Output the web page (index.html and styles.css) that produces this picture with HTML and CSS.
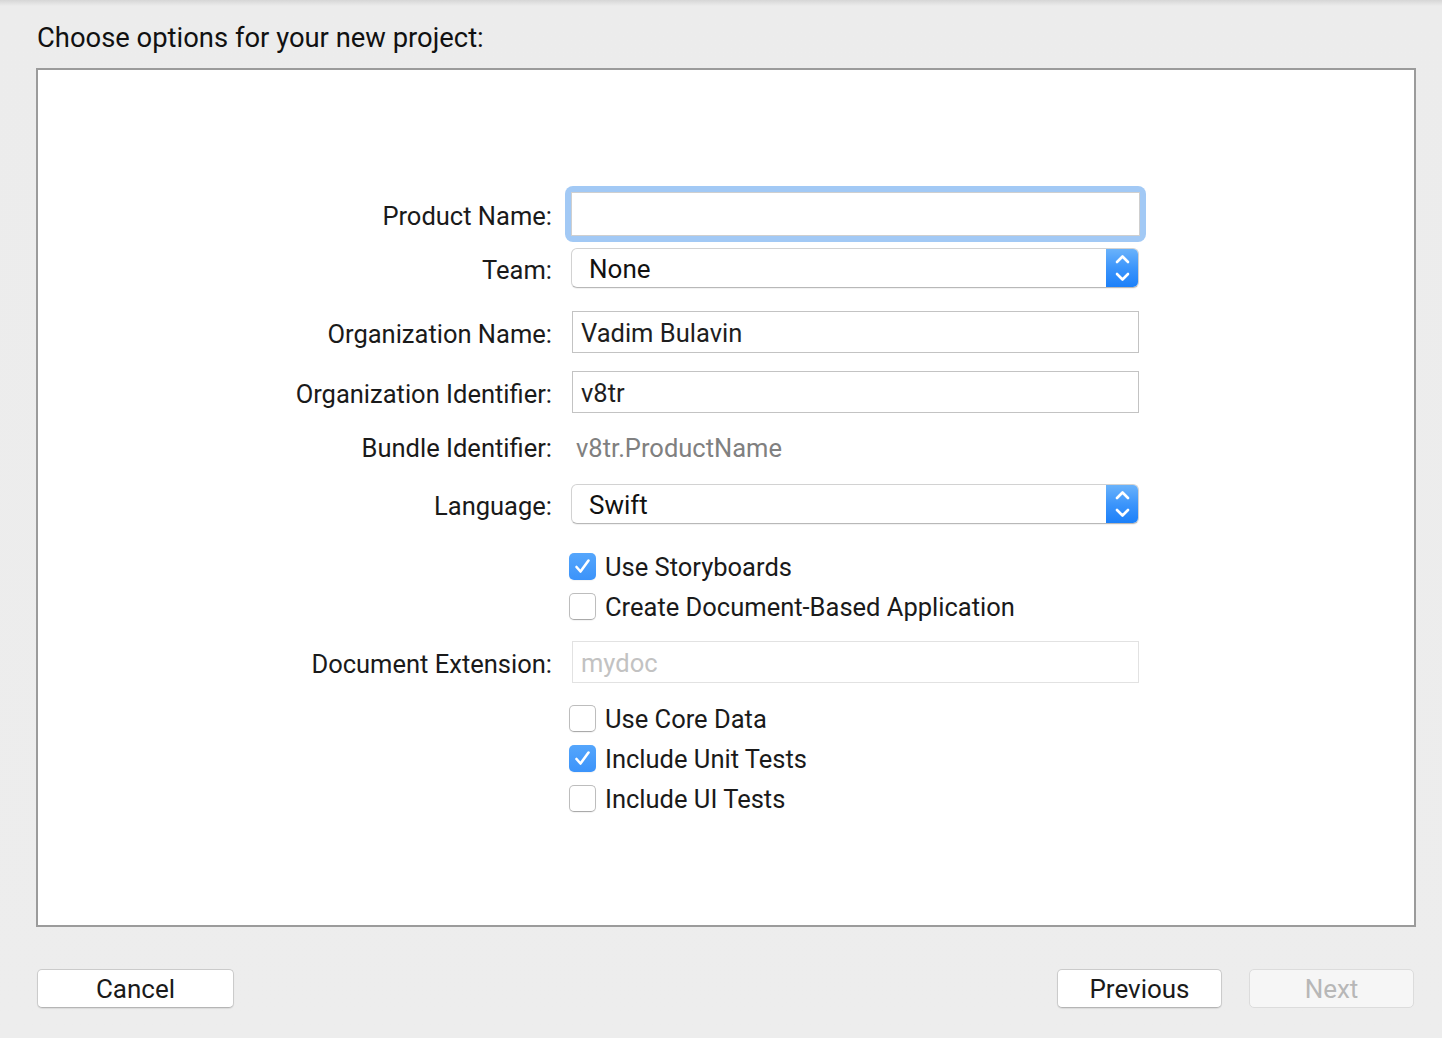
FILE: index.html
```html
<!DOCTYPE html>
<html>
<head>
<meta charset="utf-8">
<title>Choose options for your new project</title>
<link rel="stylesheet" href="styles.css">
</head>
<body>
<div class="window">
  <div class="title">Choose options for your new project:</div>
  <div class="panel">
    <div class="form">
      <div class="row row-product">
        <div class="label">Product Name:</div>
        <div class="control">
          <div class="focus-ring"><div class="field field-focused"></div></div>
        </div>
      </div>
      <div class="row row-team">
        <div class="label">Team:</div>
        <div class="control">
          <div class="popup">
            <span class="popup-text">None</span>
            <span class="popup-arrows">
              <svg width="33" height="40" viewBox="0 0 33 40"><path d="M11 14 L16.5 8.5 L22 14 M11 26 L16.5 31.5 L22 26" fill="none" stroke="#fff" stroke-width="2.6" stroke-linecap="round" stroke-linejoin="round"/></svg>
            </span>
          </div>
        </div>
      </div>
      <div class="row row-org">
        <div class="label">Organization Name:</div>
        <div class="control"><div class="field">Vadim Bulavin</div></div>
      </div>
      <div class="row row-orgid">
        <div class="label">Organization Identifier:</div>
        <div class="control"><div class="field">v8tr</div></div>
      </div>
      <div class="row row-bundle">
        <div class="label label-static">Bundle Identifier:</div>
        <div class="control"><div class="static">v8tr.ProductName</div></div>
      </div>
      <div class="row row-lang">
        <div class="label">Language:</div>
        <div class="control">
          <div class="popup">
            <span class="popup-text">Swift</span>
            <span class="popup-arrows">
              <svg width="33" height="40" viewBox="0 0 33 40"><path d="M11 14 L16.5 8.5 L22 14 M11 26 L16.5 31.5 L22 26" fill="none" stroke="#fff" stroke-width="2.6" stroke-linecap="round" stroke-linejoin="round"/></svg>
            </span>
          </div>
        </div>
      </div>
      <div class="row row-cb row-cb-first">
        <div class="label"></div>
        <div class="control check">
          <span class="box checked"><svg width="27" height="27" viewBox="0 0 27 27"><path d="M7.5 14 L11.5 18.5 L19.5 7.5" fill="none" stroke="#fff" stroke-width="2.6" stroke-linecap="round" stroke-linejoin="round"/></svg></span>
          <span class="check-text">Use Storyboards</span>
        </div>
      </div>
      <div class="row row-cb">
        <div class="label"></div>
        <div class="control check">
          <span class="box"></span>
          <span class="check-text">Create Document-Based Application</span>
        </div>
      </div>
      <div class="row row-docext">
        <div class="label">Document Extension:</div>
        <div class="control"><div class="field field-disabled">mydoc</div></div>
      </div>
      <div class="row row-cb row-cb-group">
        <div class="label"></div>
        <div class="control check">
          <span class="box"></span>
          <span class="check-text">Use Core Data</span>
        </div>
      </div>
      <div class="row row-cb">
        <div class="label"></div>
        <div class="control check">
          <span class="box checked"><svg width="27" height="27" viewBox="0 0 27 27"><path d="M7.5 14 L11.5 18.5 L19.5 7.5" fill="none" stroke="#fff" stroke-width="2.6" stroke-linecap="round" stroke-linejoin="round"/></svg></span>
          <span class="check-text">Include Unit Tests</span>
        </div>
      </div>
      <div class="row row-cb">
        <div class="label"></div>
        <div class="control check">
          <span class="box"></span>
          <span class="check-text">Include UI Tests</span>
        </div>
      </div>
    </div>
  </div>
  <div class="buttons">
    <div class="btn btn-cancel">Cancel</div>
    <div class="spacer"></div>
    <div class="btn btn-prev">Previous</div>
    <div class="btn btn-next">Next</div>
  </div>
</div>
</body>
</html>
```

FILE: styles.css
```css
html, body {
  margin: 0;
  padding: 0;
}
body {
  width: 1442px;
  height: 1038px;
  overflow: hidden;
  background: linear-gradient(to bottom, #d6d6d6 0px, #ececec 6px, #ededed 100%);
  font-family: Roboto, "Liberation Sans", Arial, sans-serif;
  font-size: 25.5px;
  color: #1e1e1e;
}
.window {
  display: flex;
  flex-direction: column;
}
.title {
  padding: 23px 0 0 37px;
  height: 30px;
  line-height: 30px;
  font-size: 27.4px;
  color: #111;
}
.panel {
  margin: 15px 0 0 36px;
  width: 1380px;
  height: 859px;
  box-sizing: border-box;
  border: 2px solid #9b9b9b;
  background: #fff;
}
.form {
  display: flex;
  flex-direction: column;
  padding-top: 116px;
}
.row {
  display: flex;
  align-items: center;
}
.label {
  width: 514px;
  margin-right: 19px;
  text-align: right;
  padding-top: 4px;
  color: #1a1a1a;
}
.label-static {
  padding-top: 0;
}
.control {
  width: 568px;
}
.row-product { height: 56px; }
.row-team { height: 40px; margin-top: 6px; }
.row-org { height: 42px; margin-top: 23px; }
.row-orgid { height: 42px; margin-top: 18px; }
.row-bundle { height: 40px; margin-top: 15px; }
.row-lang { height: 40px; margin-top: 16px; }
.row-cb { height: 28px; margin-top: 12px; }
.row-cb-first { margin-top: 28px; }
.row-docext { height: 42px; margin-top: 21px; }
.row-cb-group { margin-top: 21px; }

.focus-ring {
  margin: 0 -7px 0 -6px;
  padding: 6px;
  border-radius: 8px;
  background: #a2c9f5;
}
.field {
  height: 42px;
  box-sizing: border-box;
  border: 1px solid #c3c3c3;
  background: #fff;
  padding: 0 8px;
  line-height: 42px;
  margin-left: 1px;
  white-space: nowrap;
}
.field-focused {
  height: 44px;
  border-color: #cfcfcf;
  margin-left: 0;
}
.field-disabled {
  border-color: #e2e2e2;
  color: #c2c2c2;
}
.static {
  padding-left: 5px;
  color: #808080;
}
.popup {
  display: flex;
  align-items: center;
  height: 40px;
  box-sizing: border-box;
  border: 1px solid #d2d2d2;
  border-bottom-color: #b8b8b8;
  border-radius: 6px;
  background: #fff;
  box-shadow: 0 1px 1px rgba(0,0,0,0.06);
  overflow: hidden;
}
.popup-text {
  flex: 1;
  padding-left: 17px;
  padding-top: 2px;
  font-size: 26px;
  color: #111;
}
.popup-arrows {
  width: 33px;
  height: 40px;
  margin: -1px -1px -1px 0;
  display: block;
  background: linear-gradient(to bottom, #6cb4fb 0%, #3c95fb 50%, #1a7ff9 100%);
  border-radius: 0 6px 6px 0;
}
.popup-arrows svg { display: block; }
.check {
  display: flex;
  align-items: center;
}
.box {
  width: 27px;
  height: 27px;
  box-sizing: border-box;
  margin-left: -2px;
  border: 1px solid #bdbdbd;
  border-bottom-color: #aaaaaa;
  border-radius: 5px;
  background: #fff;
  box-shadow: 0 1px 1px rgba(0,0,0,0.05);
  display: block;
}
.box.checked {
  border: none;
  background: linear-gradient(to bottom, #55a6fc 0%, #3b93fa 100%);
}
.box svg { display: block; }
.check-text {
  margin-left: 9px;
  padding-top: 1px;
  color: #1a1a1a;
}
.buttons {
  display: flex;
  margin-top: 42px;
  padding: 0 28px 0 37px;
}
.spacer { flex: 1; }
.btn {
  height: 39px;
  box-sizing: border-box;
  border: 1px solid #cbcbcb;
  border-bottom-color: #b5b5b5;
  border-radius: 5px;
  background: #fff;
  box-shadow: 0 1px 1px rgba(0,0,0,0.08);
  text-align: center;
  line-height: 39px;
  font-size: 26px;
  color: #1a1a1a;
}
.btn-cancel { width: 197px; }
.btn-prev { width: 165px; }
.btn-next {
  width: 165px;
  margin-left: 27px;
  background: #f6f6f6;
  border-color: #dcdcdc;
  color: #b7b7b7;
  box-shadow: none;
}
```
